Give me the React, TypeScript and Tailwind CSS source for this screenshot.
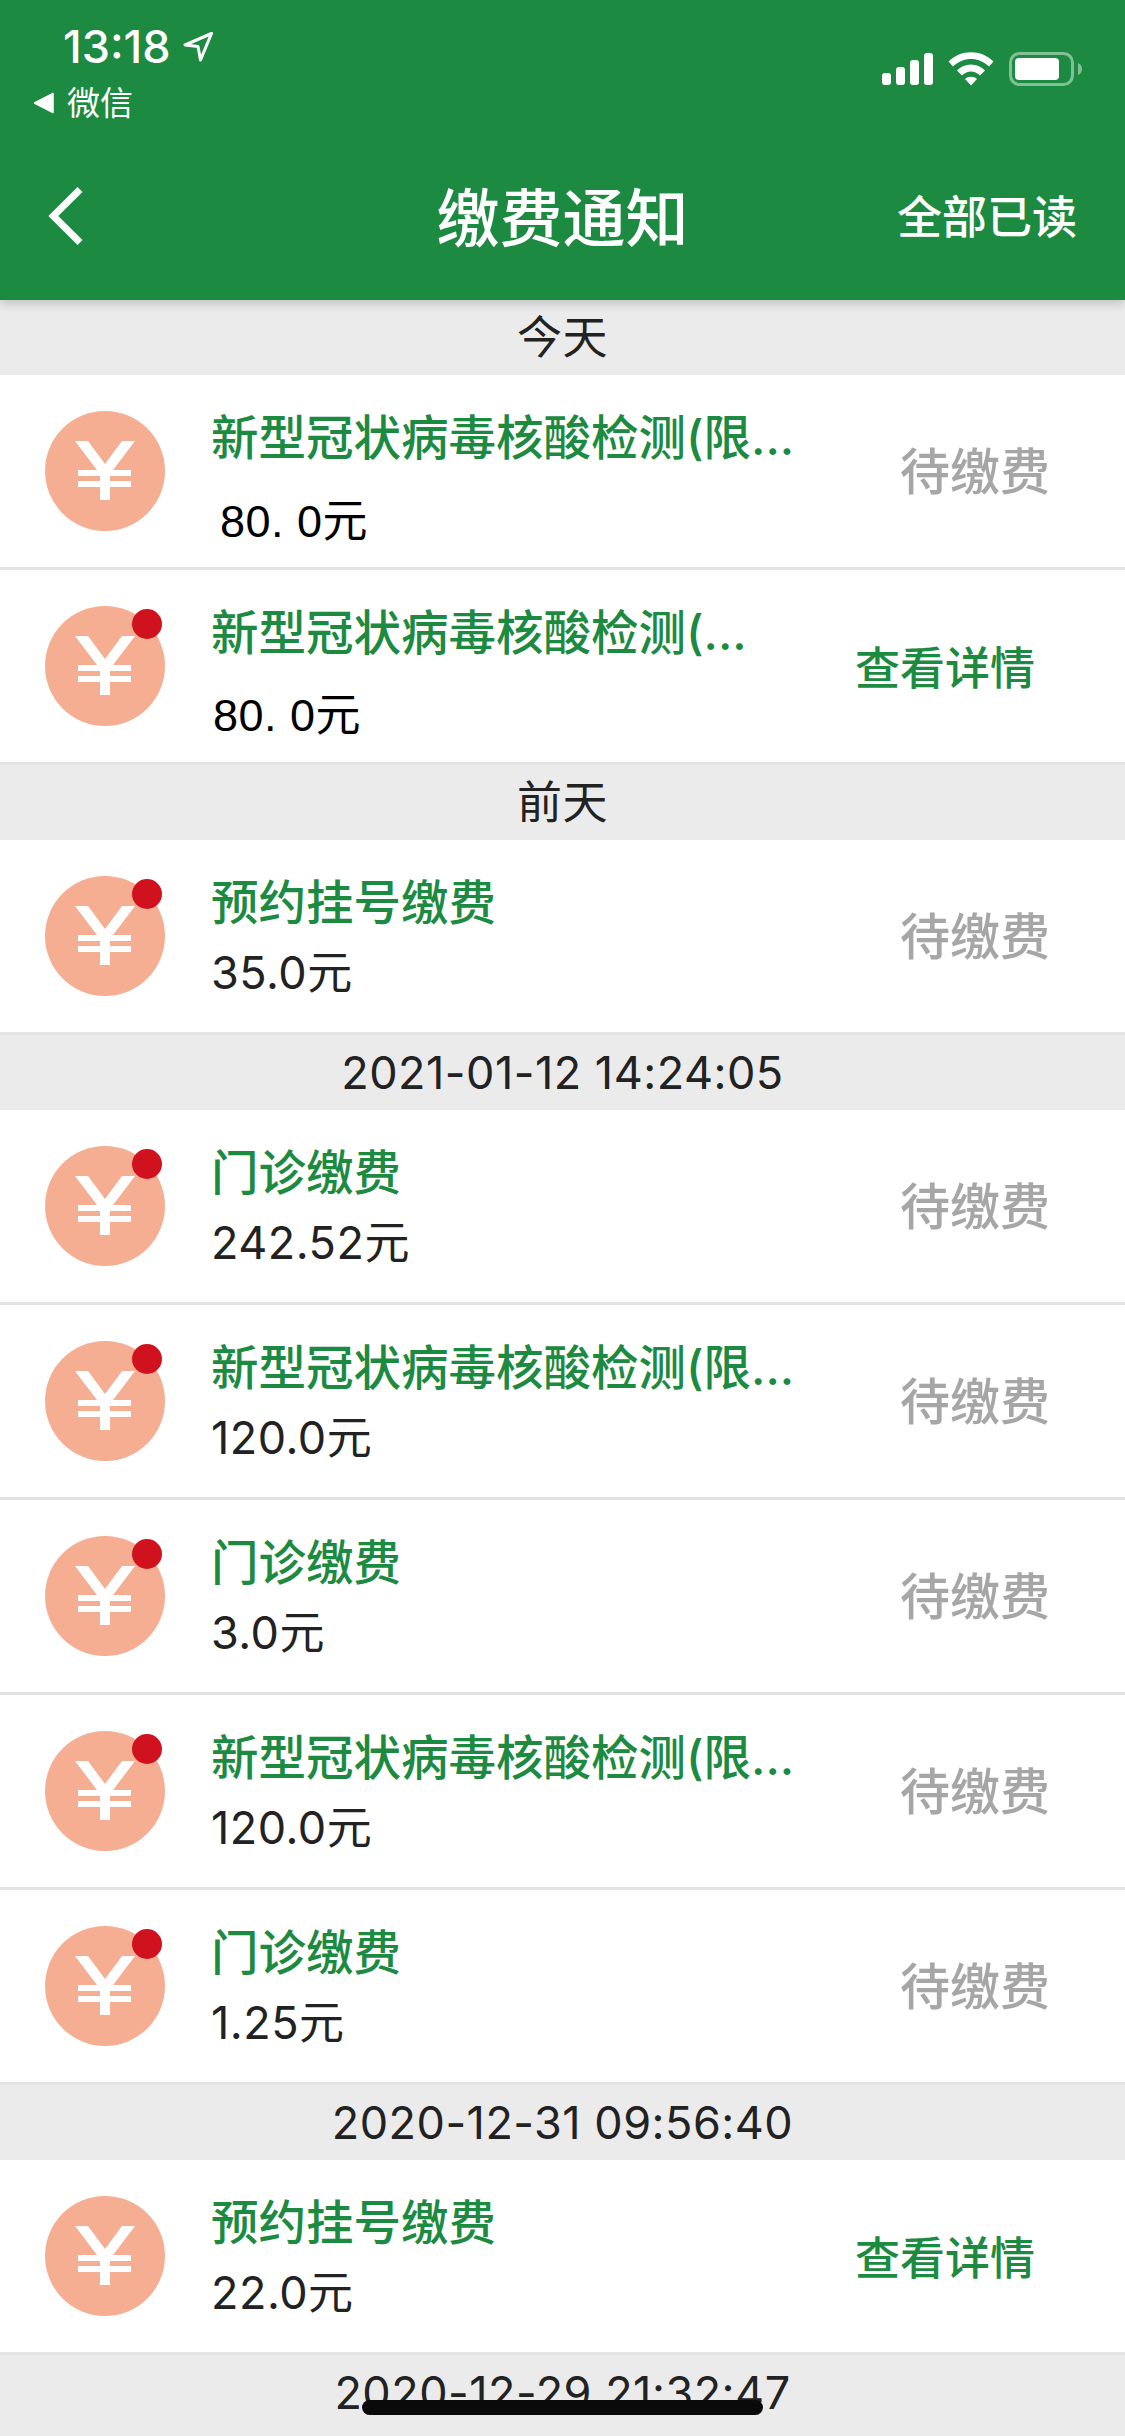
const CJK = "font-['Inter','Noto_Sans_CJK_SC',sans-serif]";

type Row = { title: string; amount: string; dot?: boolean; action?: boolean; odd?: 1 | 2 };
type Group = { label: string; rows: Row[] };

const LONG = "新型冠状病毒核酸检测(限...";

const groups: Group[] = [
  {
    label: "今天",
    rows: [
      { title: LONG, amount: "80. 0元", odd: 1 },
      { title: "新型冠状病毒核酸检测(...", amount: "80. 0元", dot: true, action: true, odd: 2 },
    ],
  },
  { label: "前天", rows: [{ title: "预约挂号缴费", amount: "35.0元", dot: true }] },
  {
    label: "2021-01-12 14:24:05",
    rows: [
      { title: "门诊缴费", amount: "242.52元", dot: true },
      { title: LONG, amount: "120.0元", dot: true },
      { title: "门诊缴费", amount: "3.0元", dot: true },
      { title: LONG, amount: "120.0元", dot: true },
      { title: "门诊缴费", amount: "1.25元", dot: true },
    ],
  },
  { label: "2020-12-31 09:56:40", rows: [{ title: "预约挂号缴费", amount: "22.0元", action: true }] },
  { label: "2020-12-29 21:32:47", rows: [] },
];

function Yen({ dot }: { dot?: boolean }) {
  return (
    <div className="relative w-[120px] h-[120px] shrink-0 rounded-full bg-[#f6ae92]">
      <svg viewBox="0 0 120 120" className="w-[120px] h-[120px]" fill="#fff">
        <path d="M30 30H43L60 53L77 30H90L65 63H55Z" />
        <rect x="55" y="58" width="10" height="31" />
        <rect x="33" y="59" width="53" height="6" />
        <rect x="33" y="70" width="53" height="6" />
      </svg>
      {dot && <div className="absolute left-[87px] top-[3px] w-[30px] h-[30px] rounded-full bg-[#d0121e]" />}
    </div>
  );
}

function Item({ row }: { row: Row }) {
  return (
    <div className="flex h-[195px] bg-white border-b-[3px] border-[#e3e3e3] pl-[45px]">
      <div className="self-center">
        <Yen dot={row.dot} />
      </div>
      <div className="flex-1 min-w-0 pl-[46px] pt-[33px]">
        <div className="text-[47.5px] leading-[60px] font-medium text-[#1c8b41] whitespace-nowrap">{row.title}</div>
        {row.odd ? (
          <div
            className={`${row.odd === 1 ? "pl-[9px] mt-[24px]" : "pl-[2px] mt-[23px]"} text-[45px] leading-[60px] tracking-[0.5px] text-black font-['Liberation_Sans','Noto_Sans_CJK_SC',sans-serif] whitespace-pre`}
          >
            {row.amount}
          </div>
        ) : (
          <div className="mt-[10px] text-[45px] leading-[60px] tracking-[0.5px] text-[#222222] whitespace-nowrap">{row.amount}</div>
        )}
      </div>
      {row.action ? (
        <div className="self-center pr-[90px] pt-[6px] text-[45px] font-medium text-[#1c8b41] whitespace-nowrap">查看详情</div>
      ) : (
        <div className="self-center pr-[75px] pt-[3px] text-[50px] font-medium text-[#a6a6a6] whitespace-nowrap">待缴费</div>
      )}
    </div>
  );
}

function StatusBar() {
  return (
    <div className="flex justify-between h-[150px] text-white">
      <div className="pl-[63px] pt-[19px]">
        <div className="flex items-center h-[56px] gap-[12px]">
          <span className="text-[45px] leading-[56px] font-medium">13:18</span>
          <svg width="30" height="30" viewBox="0 0 30 30" fill="none" stroke="#fff" strokeWidth="3" strokeLinejoin="round">
            <path d="M28.5 1.5L2 13L15 14.5L17.5 28Z" />
          </svg>
        </div>
        <div className="flex items-center ml-[-30px] mt-[6px] gap-[13px]">
          <svg width="21" height="22" viewBox="0 0 21 22" fill="#fff" stroke="#fff" strokeWidth="1.5" strokeLinejoin="round">
            <path d="M20 1.5V20.5L1.5 11Z" />
          </svg>
          <span className="text-[33px] leading-[44px]">微信</span>
        </div>
      </div>
      <div className="flex pt-[52px] pr-[43px] gap-[15px] items-start">
        <svg width="51" height="34" viewBox="0 0 51 34" fill="#fff">
          <rect x="0" y="21" width="9" height="12" rx="3" />
          <rect x="14" y="15" width="9" height="18" rx="3" />
          <rect x="28" y="8" width="9" height="25" rx="3" />
          <rect x="42" y="1" width="9" height="32" rx="3" />
        </svg>
        <svg width="46" height="34" viewBox="0 0 46 34" fill="#fff">
          <path d="M0.5 9.5C12.5 -3 33.5 -3 45.5 9.5L41 14.5C30.5 4.5 15.5 4.5 5 14.5Z" />
          <path d="M9 18.5C16 10.5 30 10.5 37 18.5L32 23.5C26.5 18 19.5 18 14 23.5Z" />
          <path d="M17 27C20 24 26 24 29 27L23 33.5Z" />
        </svg>
        <svg width="73" height="34" viewBox="0 0 73 34" fill="none">
          <rect x="1.5" y="1.5" width="62" height="31" rx="9" stroke="#fff" strokeOpacity="0.45" strokeWidth="3" />
          <rect x="6" y="6" width="44" height="22" rx="4" fill="#fff" />
          <path d="M69 11C71.5 12 73 14 73 17C73 20 71.5 22 69 23Z" fill="#fff" fillOpacity="0.45" />
        </svg>
      </div>
    </div>
  );
}

export default function App() {
  return (
    <div className={`relative w-[1125px] h-[2436px] overflow-hidden bg-[#ebebeb] ${CJK}`}>
      <header className="relative z-10 h-[300px] bg-[#1c8b41] shadow-[0_3px_10px_rgba(0,0,0,0.2)] text-white">
        <StatusBar />
        <div className="grid grid-cols-[1fr_auto_1fr] items-center h-[136px]">
          <div className="pl-[45px]">
            <svg width="40" height="62" viewBox="0 0 40 62" fill="none" stroke="#fff" strokeWidth="7">
              <path d="M35 2.5L8.3 29L35 55.5" />
            </svg>
          </div>
          <div className="text-[63px] leading-[80px] font-medium">缴费通知</div>
          <div className="text-right pr-[48px] text-[45px] leading-[60px] font-medium">全部已读</div>
        </div>
      </header>
      {groups.map((g) => (
        <section key={g.label}>
          <div className="h-[75px] flex items-center justify-center text-[45px] leading-[60px] tracking-[0.5px] text-[#222222]">{g.label}</div>
          {g.rows.map((r, i) => (
            <Item key={i} row={r} />
          ))}
        </section>
      ))}
      <div className="absolute left-[362px] top-[2400px] w-[401px] h-[15px] rounded-full bg-[#0a0a0a]" />
    </div>
  );
}
